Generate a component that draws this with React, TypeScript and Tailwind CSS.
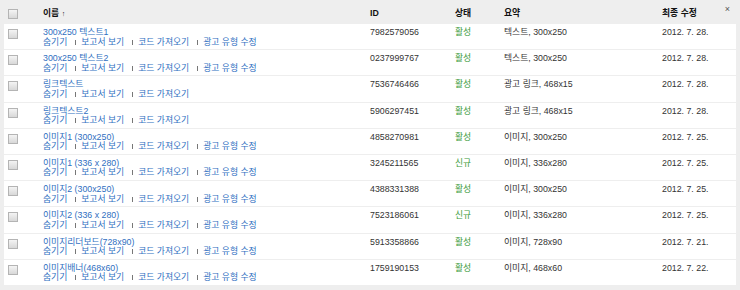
import React from "react";

type Ad = {
  name: string;
  id: string;
  status: "활성" | "신규";
  summary: string;
  date: string;
  editable: boolean;
};

const ads: Ad[] = [
  { name: "300x250 텍스트1", id: "7982579056", status: "활성", summary: "텍스트, 300x250", date: "2012. 7. 28.", editable: true },
  { name: "300x250 텍스트2", id: "0237999767", status: "활성", summary: "텍스트, 300x250", date: "2012. 7. 28.", editable: true },
  { name: "링크텍스트", id: "7536746466", status: "활성", summary: "광고 링크, 468x15", date: "2012. 7. 28.", editable: false },
  { name: "링크텍스트2", id: "5906297451", status: "활성", summary: "광고 링크, 468x15", date: "2012. 7. 28.", editable: false },
  { name: "이미지1 (300x250)", id: "4858270981", status: "활성", summary: "이미지, 300x250", date: "2012. 7. 25.", editable: true },
  { name: "이미지1 (336 x 280)", id: "3245211565", status: "신규", summary: "이미지, 336x280", date: "2012. 7. 25.", editable: true },
  { name: "이미지2 (300x250)", id: "4388331388", status: "활성", summary: "이미지, 300x250", date: "2012. 7. 25.", editable: true },
  { name: "이미지2 (336 x 280)", id: "7523186061", status: "신규", summary: "이미지, 336x280", date: "2012. 7. 25.", editable: true },
  { name: "이미지리더보드(728x90)", id: "5913358866", status: "활성", summary: "이미지, 728x90", date: "2012. 7. 21.", editable: true },
  { name: "이미지배너(468x60)", id: "1759190153", status: "활성", summary: "이미지, 468x60", date: "2012. 7. 22.", editable: true },
];

const cols = "grid grid-cols-[39px_327px_85px_49px_158px_1fr]";

function Box() {
  return (
    <span className="block w-[10px] h-[10px] border border-[#b4b4b4] bg-gradient-to-b from-[#f4f4f4] to-[#d8d8d8]" />
  );
}

// small grey divider between row actions
function Bar() {
  return <span className="inline-block w-px h-[5px] bg-[#777] ml-[8px] mr-[5px] align-baseline" />;
}

export default function App() {
  const actions = (a: Ad) => {
    const items = ["숨기기", "보고서 보기", "코드 가져오기"];
    if (a.editable) items.push("광고 유형 수정");
    return items;
  };

  return (
    <div
      className="w-[740px] h-[290px] bg-[#eeeeee] px-[4px] text-[8.8px] leading-[9.5px] text-[#333]"
      style={{ fontFamily: '"Liberation Sans", "Noto Sans CJK KR", sans-serif' }}
    >
      {/* header */}
      <div className={`${cols} h-[24px] items-center pt-[3px] relative text-[#111]`}>
        <div className="pl-[4px]"><Box /></div>
        <div className="font-bold">이름 <span className="text-[7px] font-bold">↑</span></div>
        <div className="font-semibold">ID</div>
        <div className="font-semibold">상태</div>
        <div className="font-semibold">요약</div>
        <div className="font-semibold">최종 수정</div>
        <span className="absolute right-[6px] top-[5px] text-[9px] text-[#555]">×</span>
      </div>

      {/* rows */}
      <div className="flex flex-col gap-px">
        {ads.map((a) => (
          <div key={a.id} className={`${cols} h-[25.2px] bg-white pt-[4px]`}>
            <div className="pl-[4px] pt-[1px]"><Box /></div>
            <div className="text-[#2f6fc1]">
              <div>{a.name}</div>
              <div className="whitespace-nowrap">
                {actions(a).map((t, i) => (
                  <React.Fragment key={t}>
                    {i > 0 && <Bar />}
                    <span>{t}</span>
                  </React.Fragment>
                ))}
              </div>
            </div>
            <div>{a.id}</div>
            <div className="text-[#3a9a3a]">{a.status}</div>
            <div>{a.summary}</div>
            <div>{a.date}</div>
          </div>
        ))}
      </div>
    </div>
  );
}
